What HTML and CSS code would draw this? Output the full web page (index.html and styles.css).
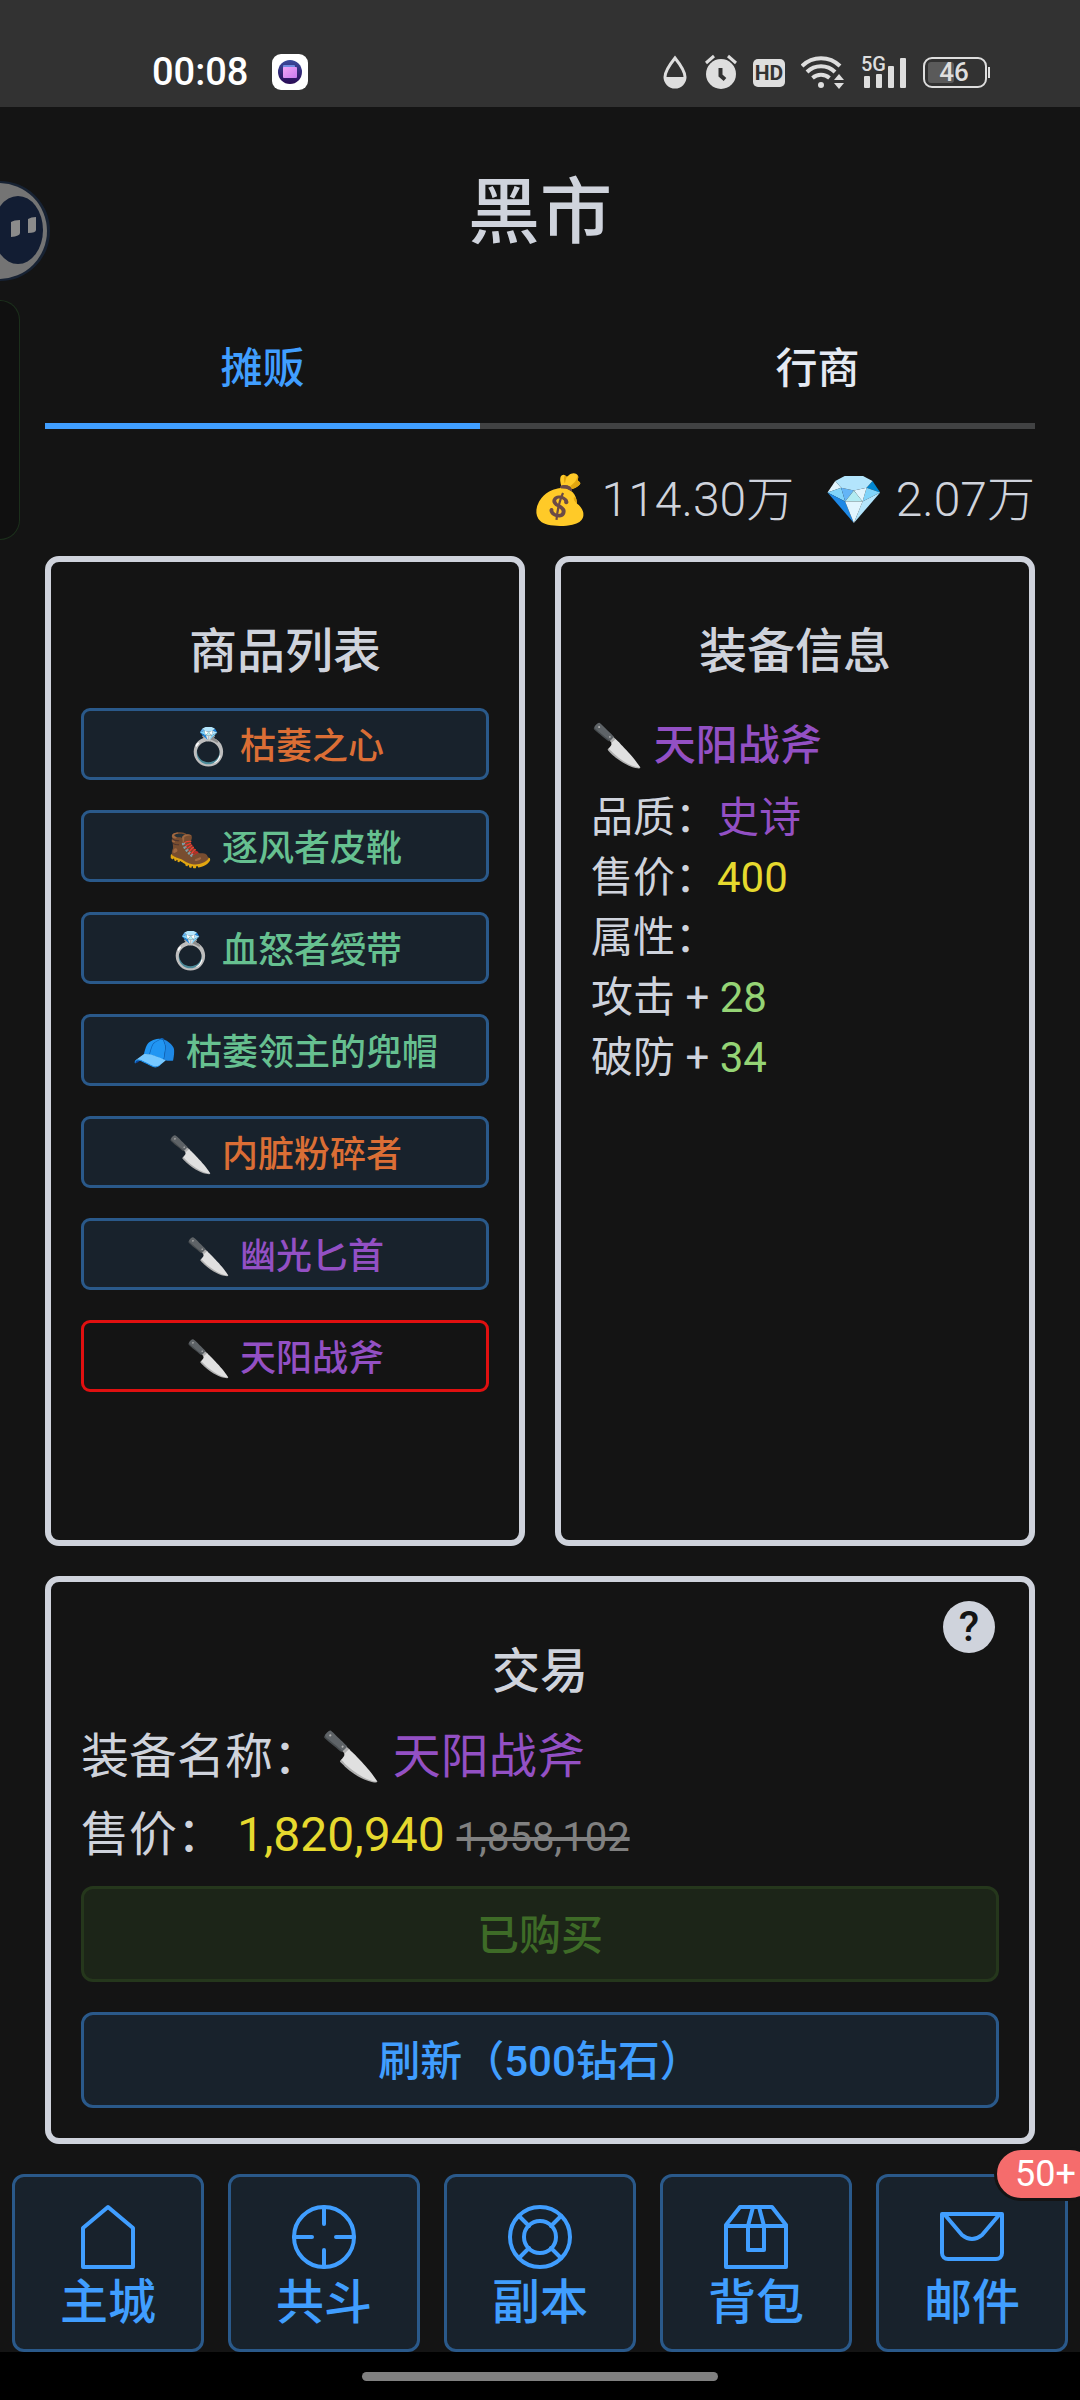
FILE: index.html
```html
<!DOCTYPE html>
<html lang="zh-CN">
<head>
<meta charset="utf-8">
<meta name="viewport" content="width=device-width, initial-scale=1">
<title>黑市</title>
<link rel="stylesheet" href="styles.css">
</head>
<body>
<div class="statusbar">
  <div class="status-left">
    <span class="clock">00:08</span>
    <svg class="app-icon" width="36" height="36" viewBox="0 0 36 36" aria-hidden="true">
      <defs>
        <linearGradient id="ring" x1="0" y1="0" x2="0" y2="1"><stop offset="0" stop-color="#3b4a9c"/><stop offset="1" stop-color="#2a0a55"/></linearGradient>
        <linearGradient id="card" x1="0" y1="0" x2="1" y2="1"><stop offset="0" stop-color="#f3a6f5"/><stop offset="1" stop-color="#c77bf0"/></linearGradient>
      </defs>
      <rect width="36" height="36" rx="9" fill="#fff"/>
      <circle cx="18" cy="18" r="12" fill="url(#ring)"/>
      <rect x="11" y="11" width="12" height="5" rx="1" fill="#6f8be0"/>
      <rect x="11" y="13" width="14" height="11" rx="1" fill="url(#card)"/>
    </svg>
  </div>
  <div class="status-right">
    <svg width="28" height="36" viewBox="0 0 28 36" aria-hidden="true"><path d="M14 4C10 9 4 16.500 4 23a10 10 0 0 0 20 0C24 16.500 18 9 14 4z" fill="none" stroke="#dedede" stroke-width="3"/><path d="M4 23h20a10 10 0 0 1-20 0z" fill="#dedede"/></svg>
    <svg width="32" height="36" viewBox="0 0 32 36" aria-hidden="true"><circle cx="16" cy="20" r="15" fill="#dedede"/><path d="M1 9l8-7M31 9l-8-7" stroke="#dedede" stroke-width="3"/><path d="M15.500 14v7.500l4.500 4" fill="none" stroke="#323232" stroke-width="4"/></svg>
    <svg width="32" height="36" viewBox="0 0 32 36" aria-label="HD"><rect y="5" width="32" height="28" rx="5" fill="#dedede"/><text x="16" y="26" text-anchor="middle" class="hd">HD</text></svg>
    <svg width="44" height="36" viewBox="0 0 44 36" fill="none" stroke="#dedede" stroke-width="4" aria-hidden="true"><path d="M1 12a27 27 0 0 1 38 0M6 18a20 20 0 0 1 28 0M11.500 24a13 13 0 0 1 17 0"/><circle cx="20" cy="31" r="3" fill="#dedede" stroke="none"/><path d="M38 20l5 6H33zM38 35l5-6H33z" fill="#dedede" stroke="none"/></svg>
    <svg class="signal" width="46" height="36" viewBox="0 0 46 36" fill="#dedede" aria-label="5G"><text x="0" y="17" class="net">5G</text><rect x="3" y="22" width="6" height="12" rx="1"/><rect x="15" y="20" width="6" height="14" rx="1"/><rect x="27" y="12" width="6" height="22" rx="1"/><rect x="39" y="4" width="6" height="30" rx="1"/></svg>
    <svg width="68" height="36" viewBox="0 0 68 36" aria-label="46%"><rect x="1" y="4" width="62" height="29" rx="8" fill="none" stroke="#dedede" stroke-width="2"/><rect x="5" y="8" width="26" height="21" rx="3" fill="#5a5a5a"/><rect x="65" y="13" width="2" height="11" fill="#dedede"/><text x="31" y="27" text-anchor="middle" class="battery">46</text></svg>
  </div>
</div>

<main class="page">
  <h1>黑市</h1>

  <div class="tabs" role="tablist">
    <button class="tab tab-active" role="tab" aria-selected="true">摊贩</button>
    <button class="tab" role="tab" aria-selected="false">行商</button>
  </div>

  <div class="wallet">
    <span>💰 114.30万</span>
    <span>💎 2.07万</span>
  </div>

  <div class="columns">
    <section class="panel goods">
      <h2>商品列表</h2>
      <button class="item legend">💍 枯萎之心</button>
      <button class="item fine">🥾 逐风者皮靴</button>
      <button class="item fine">💍 血怒者绶带</button>
      <button class="item fine">🧢 枯萎领主的兜帽</button>
      <button class="item legend">🔪 内脏粉碎者</button>
      <button class="item epic">🔪 幽光匕首</button>
      <button class="item epic item-selected">🔪 天阳战斧</button>
    </section>
    <section class="panel info">
      <h2>装备信息</h2>
      <p class="name epic">🔪 天阳战斧</p>
      <p>品质：<span class="epic">史诗</span></p>
      <p>售价：<span class="gold">400</span></p>
      <p>属性：</p>
      <p>攻击 + <span class="bonus">28</span></p>
      <p>破防 + <span class="bonus">34</span></p>
    </section>
  </div>

  <section class="panel trade">
    <button class="help" aria-label="帮助">?</button>
    <h2>交易</h2>
    <p>装备名称：<span class="epic">🔪 天阳战斧</span></p>
    <p>售价： <span class="gold">1,820,940</span> <del>1,858,102</del></p>
    <button class="action bought" disabled>已购买</button>
    <button class="action refresh">刷新（500钻石）</button>
  </section>
</main>

<nav class="nav">
  <button class="nav-item"><svg width="72" height="72" viewBox="0 0 72 72" aria-hidden="true"><path d="M11 66V27L36 6l25 21v39z"/></svg>主城</button>
  <button class="nav-item"><svg width="72" height="72" viewBox="0 0 72 72" aria-hidden="true"><circle cx="36" cy="36" r="30"/><path d="M36 6v17M36 49v17M6 36h18M48 36h18"/></svg>共斗</button>
  <button class="nav-item"><svg width="72" height="72" viewBox="0 0 72 72" aria-hidden="true"><circle cx="36" cy="36" r="30"/><circle cx="36" cy="36" r="16"/><path d="M15 15l10 10M57 15L47 25M15 57l10-10M57 57L47 47"/></svg>副本</button>
  <button class="nav-item"><svg width="72" height="72" viewBox="0 0 72 72" aria-hidden="true"><path d="M6 25v41h60V25zM6 24L20 6h32l14 18M33 6l-5 19v24h16V25L39 6"/></svg>背包</button>
  <button class="nav-item"><svg width="72" height="72" viewBox="0 0 72 72" aria-hidden="true"><path d="M6 13h60v39a6 6 0 0 1-6 6H12a6 6 0 0 1-6-6zM9 14l17 20q10 8 20 0l17-20"/></svg>邮件<span class="badge">50+</span></button>
</nav>

<div class="gesture"><span class="gesture-bar"></span></div>

<svg class="float-ball" width="52" height="104" viewBox="0 0 52 104" aria-hidden="true">
  <circle cx="0" cy="52" r="50" fill="#172233"/>
  <circle cx="-1" cy="52" r="48" fill="#747474"/>
  <ellipse cx="18" cy="51" rx="25" ry="34" fill="#121d33"/>
  <path d="M11 43q3-2 9-2v13q0 3-9 4zM28 40q3-2 8-2v13q0 3-8 3z" fill="#8b8b8b"/>
</svg>
<div class="side-drawer"></div>
</body>
</html>
```
FILE: styles.css
```css
* { box-sizing: border-box; }

body {
  margin: 0;
  position: relative;
  min-height: 100vh;
  display: flex;
  flex-direction: column;
  overflow-x: hidden;
  background: #141414;
  color: #cfd3dc;
  font-family: Roboto, "Noto Sans CJK SC", "Noto Color Emoji", sans-serif;
}

h1, h2, p { margin: 0; font-weight: 400; }

button {
  margin: 0;
  padding: 0;
  font: inherit;
  color: inherit;
  background: none;
  border: 0;
}

.legend { color: #db6e35; }
.fine { color: #66c090; }
.epic { color: #9350c4; }
.gold { color: #e6d92e; }
.bonus { color: #95d475; }

/* status bar */
.statusbar {
  height: 107px;
  padding: 36px 89px 0 152px;
  display: flex;
  align-items: center;
  justify-content: space-between;
  background: #323232;
}
.status-left, .status-right { display: flex; align-items: center; }
.status-left { gap: 24px; }
.status-right { gap: 16px; }
.clock { font-size: 38px; font-weight: 500; color: #fff; }
.signal { overflow: visible; }
.hd { font-size: 21px; font-weight: 700; fill: #323232; }
.net { font-size: 20px; font-weight: 500; }
.battery { font-size: 26px; font-weight: 500; fill: #dedede; }

/* page */
.page {
  padding: 52px 45px 0;
  display: flex;
  flex-direction: column;
}
h1 {
  font-size: 72px;
  line-height: 108px;
  font-weight: 500;
  text-align: center;
}
h2 {
  margin-bottom: 20px;
  font-size: 48px;
  line-height: 72px;
  font-weight: 500;
  text-align: center;
}

.tabs {
  margin-top: 40px;
  display: grid;
  grid-template-columns: 1fr 1fr;
  column-gap: 120px;
  border-bottom: 6px solid #414243;
}
.tab {
  margin-bottom: -6px;
  padding-top: 8px;
  border-bottom: 6px solid transparent;
  font-size: 42px;
  line-height: 108px;
  font-weight: 500;
  color: #e5eaf3;
}
.tab-active { color: #409eff; border-bottom-color: #409eff; }

.wallet {
  margin: 35px 0 20px;
  display: flex;
  justify-content: flex-end;
  gap: 30px;
  font-size: 48px;
  line-height: 72px;
  font-weight: 300;
}

.columns {
  display: grid;
  grid-template-columns: 1fr 1fr;
  gap: 30px;
}
.panel {
  padding: 54px 30px 30px;
  border: 6px solid #cfd3dc;
  border-radius: 14px;
}
.columns .panel { min-height: 990px; }

.goods { display: flex; flex-direction: column; }
.item {
  height: 72px;
  margin-bottom: 30px;
  padding-bottom: 2px;
  background: #18222c;
  border: 3px solid #2a598a;
  border-radius: 9px;
  font-size: 36px;
  font-weight: 500;
}
.item-selected { background: none; border-color: #e01010; }

.info { font-size: 42px; line-height: 60px; }
.info .name { padding: 2px 0 6px; line-height: 72px; font-weight: 500; }

.trade {
  position: relative;
  margin-top: 30px;
  display: flex;
  flex-direction: column;
  font-size: 48px;
  line-height: 78px;
}
.trade h2 { margin-bottom: 10px; }
del { font-size: 40px; line-height: 48px; color: #808080; }
.help {
  position: absolute;
  top: 19px;
  right: 34px;
  width: 52px;
  height: 52px;
  border-radius: 50%;
  background: #cfd3dc;
  color: #141414;
  font-size: 42px;
  line-height: 52px;
  font-weight: 500;
}
.action {
  height: 96px;
  padding-top: 3px;
  border: 3px solid;
  border-radius: 12px;
  font-size: 42px;
  line-height: 60px;
  font-weight: 500;
}
.bought {
  margin-top: 12px;
  color: #3e6b27;
  background: #1c2518;
  border-color: #25371c;
}
.refresh {
  margin-top: 30px;
  color: #409eff;
  background: #18222c;
  border-color: #2a598a;
}

/* bottom navigation */
.nav {
  margin-top: 30px;
  padding: 0 12px;
  display: grid;
  grid-template-columns: repeat(5, 1fr);
  gap: 24px;
}
.nav-item {
  position: relative;
  height: 178px;
  padding-top: 8px;
  display: flex;
  flex-direction: column;
  align-items: center;
  justify-content: center;
  background: #18222c;
  border: 3px solid #2a598a;
  border-radius: 12px;
  color: #409eff;
  font-size: 48px;
  line-height: 60px;
  font-weight: 500;
}
.nav-item svg {
  fill: none;
  stroke: currentColor;
  stroke-width: 4;
  stroke-linecap: round;
  stroke-linejoin: round;
}
.badge {
  position: absolute;
  top: -30px;
  right: -32px;
  height: 54px;
  padding: 0 18px;
  border: 3px solid #141414;
  border-radius: 27px;
  background: #f56c6c;
  color: #fff;
  font-size: 36px;
  line-height: 48px;
  font-weight: 400;
}

.gesture {
  flex: 1;
  min-height: 48px;
  display: flex;
  justify-content: center;
  align-items: center;
  background: #000;
}
.gesture-bar {
  width: 33%;
  height: 9px;
  border-radius: 5px;
  background: #808080;
}

/* floating widgets at the left edge */
.float-ball { position: absolute; left: 0; top: 179px; }
.side-drawer {
  position: absolute;
  left: 0;
  top: 300px;
  width: 20px;
  height: 240px;
  border: 1px solid #1c301c;
  border-left: 0;
  border-radius: 0 22px 22px 0;
  background: #101010;
}
```
